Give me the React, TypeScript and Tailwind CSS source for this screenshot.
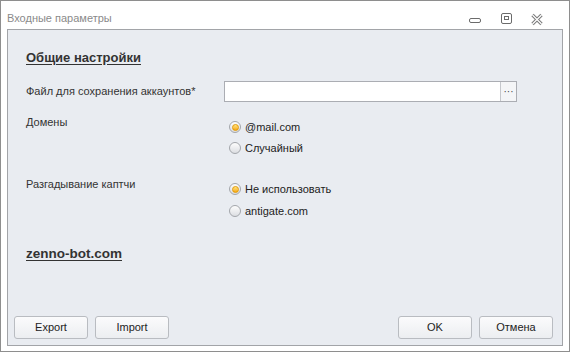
import React from "react";

const font = { fontFamily: '"Liberation Sans", Arial, sans-serif' };

function Radio({ checked, label }: { checked?: boolean; label: string }) {
  return (
    <div className="flex h-[20px] items-center">
      <span className="relative ml-[5px] flex h-[12px] w-[12px] items-center justify-center rounded-full border border-[#a3a6ab] bg-gradient-to-b from-[#fdfdfd] to-[#dcdee2]">
        {checked && (
          <span className="h-[7px] w-[7px] rounded-full border border-[#e39a05] bg-gradient-to-b from-[#ffe47a] to-[#f5a800]" />
        )}
      </span>
      <span className="ml-[4px] text-[11px] text-[#222]">{label}</span>
    </div>
  );
}

function Btn({ children }: { children: React.ReactNode }) {
  return (
    <div className="flex h-[23px] w-[74px] items-center justify-center rounded-[3px] border border-[#b9bcc1] bg-gradient-to-b from-[#fbfbfc] to-[#eceef1] text-[11px] text-[#222]">
      {children}
    </div>
  );
}

export default function App() {
  return (
    <div
      className="flex h-[352px] w-[570px] flex-col border border-[#8e8e8e] bg-white"
      style={font}
    >
      {/* title bar */}
      <div className="flex h-[28px] shrink-0 items-center pl-[6px]">
        <span className="mt-[7px] text-[11px] text-[#8a8a8a]">Входные параметры</span>
        <div className="flex-1" />
        <svg width="90" height="28" viewBox="0 0 90 28" className="mr-[15px]">
          {/* minimize: x480-491 */}
          <rect x="5.5" y="17.5" width="11" height="4" rx="1.5" fill="none" stroke="#6b6b6b" strokeWidth="1" />
          {/* restore: x512-522 */}
          <rect x="37.5" y="12.5" width="10" height="10" rx="1.5" fill="none" stroke="#6b6b6b" strokeWidth="1" />
          <rect x="40.5" y="15.5" width="4" height="3" fill="none" stroke="#6b6b6b" strokeWidth="1" />
          {/* close: x543-553 */}
          <path d="M68.5 14 L77.5 23 M77.5 14 L68.5 23" stroke="#7a7a7a" strokeWidth="3.2" strokeLinecap="butt" />
          <path d="M68.5 14 L77.5 23 M77.5 14 L68.5 23" stroke="#ffffff" strokeWidth="1.2" strokeLinecap="butt" />
        </svg>
      </div>

      {/* panel */}
      <div className="mx-[6px] mb-[5px] flex flex-1 flex-col border border-[#a2a4a8] bg-[#e9ecf1]">
        <div className="mt-[20px] pl-[18px] text-[13px] font-bold leading-[16px] text-[#333] underline underline-offset-2">
          Общие настройки
        </div>

        <div className="mt-[15px] flex h-[21px] items-center pl-[18px]">
          <div className="w-[198px] text-[11px] text-[#333]">Файл для сохранения аккаунтов*</div>
          <div className="flex h-[21px] w-[293px] border border-[#abadb3] bg-white">
            <div className="flex-1" />
            <div className="flex w-[16px] items-center justify-center border-l border-[#c5c7cc] bg-[#f4f5f7] text-[10px] leading-none text-[#444]">
              ···
            </div>
          </div>
        </div>

        <div className="mt-[12px] flex pl-[18px]">
          <div className="w-[198px] text-[11px] leading-[16px] text-[#333]">Домены</div>
          <div className="flex flex-col gap-[1px] pt-[3px]">
            <Radio checked label="@mail.com" />
            <Radio label="Случайный" />
          </div>
        </div>

        <div className="mt-[18px] flex pl-[18px]">
          <div className="w-[198px] text-[11px] leading-[16px] text-[#333]">Разгадывание каптчи</div>
          <div className="flex flex-col gap-[2px] pt-[3px]">
            <Radio checked label="Не использовать" />
            <Radio label="antigate.com" />
          </div>
        </div>

        <div className="mt-[25px] pl-[18px] text-[13.5px] font-bold leading-[16px] text-[#333] underline underline-offset-2">
          zenno-bot.com
        </div>

        <div className="flex-1" />

        <div className="mb-[6px] flex pl-[6px] pr-[9px]">
          <div className="flex gap-[7px]">
            <Btn>Export</Btn>
            <Btn>Import</Btn>
          </div>
          <div className="flex-1" />
          <div className="flex gap-[7px]">
            <Btn>OK</Btn>
            <Btn>Отмена</Btn>
          </div>
        </div>
      </div>
    </div>
  );
}
